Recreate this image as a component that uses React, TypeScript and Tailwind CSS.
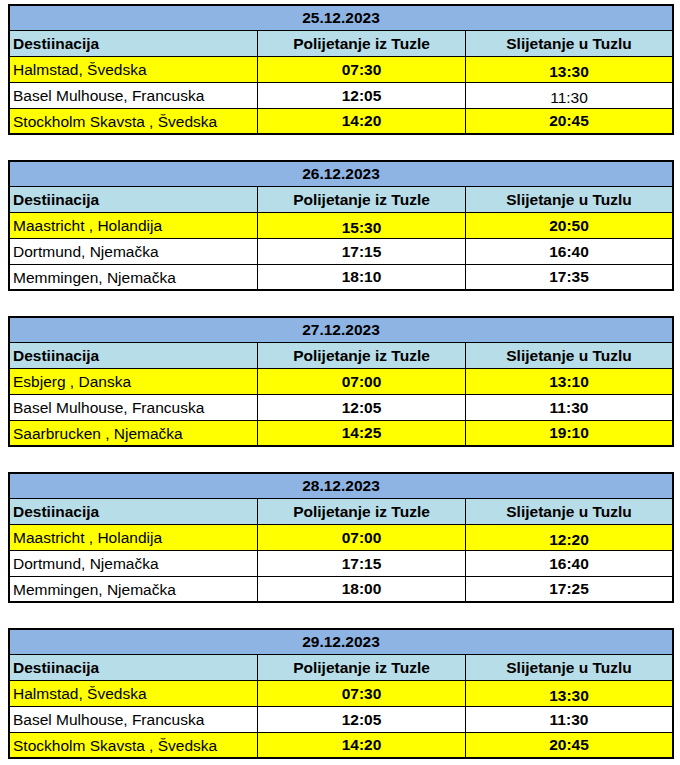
type Row = {
  dest: string;
  from: string;
  to: string;
  yellow?: boolean;
  toPlain?: boolean;
  fromLow?: boolean;
  toLow?: boolean;
};

type Day = { date: string; rows: Row[] };

const days: Day[] = [
  {
    date: '25.12.2023',
    rows: [
      { dest: 'Halmstad, Švedska', from: '07:30', to: '13:30', yellow: true, toLow: true },
      { dest: 'Basel Mulhouse, Francuska', from: '12:05', to: '11:30', toPlain: true, toLow: true },
      { dest: 'Stockholm Skavsta , Švedska', from: '14:20', to: '20:45', yellow: true },
    ],
  },
  {
    date: '26.12.2023',
    rows: [
      { dest: 'Maastricht , Holandija', from: '15:30', to: '20:50', yellow: true, fromLow: true },
      { dest: 'Dortmund, Njemačka', from: '17:15', to: '16:40' },
      { dest: 'Memmingen, Njemačka', from: '18:10', to: '17:35' },
    ],
  },
  {
    date: '27.12.2023',
    rows: [
      { dest: 'Esbjerg , Danska', from: '07:00', to: '13:10', yellow: true },
      { dest: 'Basel Mulhouse, Francuska', from: '12:05', to: '11:30' },
      { dest: 'Saarbrucken , Njemačka', from: '14:25', to: '19:10', yellow: true },
    ],
  },
  {
    date: '28.12.2023',
    rows: [
      { dest: 'Maastricht , Holandija', from: '07:00', to: '12:20', yellow: true, toLow: true },
      { dest: 'Dortmund, Njemačka', from: '17:15', to: '16:40' },
      { dest: 'Memmingen, Njemačka', from: '18:00', to: '17:25' },
    ],
  },
  {
    date: '29.12.2023',
    rows: [
      { dest: 'Halmstad, Švedska', from: '07:30', to: '13:30', yellow: true, toLow: true },
      { dest: 'Basel Mulhouse, Francuska', from: '12:05', to: '11:30' },
      { dest: 'Stockholm Skavsta , Švedska', from: '14:20', to: '20:45', yellow: true },
    ],
  },
];

function DayTable({ day }: { day: Day }) {
  return (
    <div className="w-[666px] border-2 border-black">
      <div className="h-[25px] bg-[#8db4e2] border-b border-black flex items-center justify-center font-bold">
        {day.date}
      </div>
      <div className="h-[26px] bg-[#b7dee8] border-b border-black grid grid-cols-[248px_208px_206px] font-bold">
        <div className="border-r border-black flex items-center pl-[3px]">Destiinacija</div>
        <div className="border-r border-black flex items-center justify-center">Polijetanje iz Tuzle</div>
        <div className="flex items-center justify-center">Slijetanje u Tuzlu</div>
      </div>
      {day.rows.map((r, i) => {
        const last = i === day.rows.length - 1;
        return (
          <div
            key={i}
            className={
              (last ? 'h-[24px] ' : 'h-[26px] border-b border-black ') +
              (r.yellow ? 'bg-[#ffff00] ' : 'bg-white ') +
              'grid grid-cols-[248px_208px_206px]'
            }
          >
            <div className="border-r border-black flex items-center pl-[3px] pt-[1px]">{r.dest}</div>
            <div
              className={
                'border-r border-black flex items-center justify-center font-bold ' +
                (r.fromLow ? 'pt-[4px]' : 'pt-[0px]')
              }
            >
              {r.from}
            </div>
            <div
              className={
                'flex items-center justify-center ' +
                (r.toPlain ? 'font-normal ' : 'font-bold ') +
                (r.toLow ? 'pt-[5px]' : 'pt-[0px]')
              }
            >
              {r.to}
            </div>
          </div>
        );
      })}
    </div>
  );
}

export default function App() {
  return (
    <div className="w-[680px] h-[765px] bg-white pt-[4px] pl-[8px] flex flex-col gap-[25px] text-black text-[15.5px] leading-none font-['Liberation_Sans',Arial,sans-serif]">
      {days.map((d) => (
        <DayTable key={d.date} day={d} />
      ))}
    </div>
  );
}
